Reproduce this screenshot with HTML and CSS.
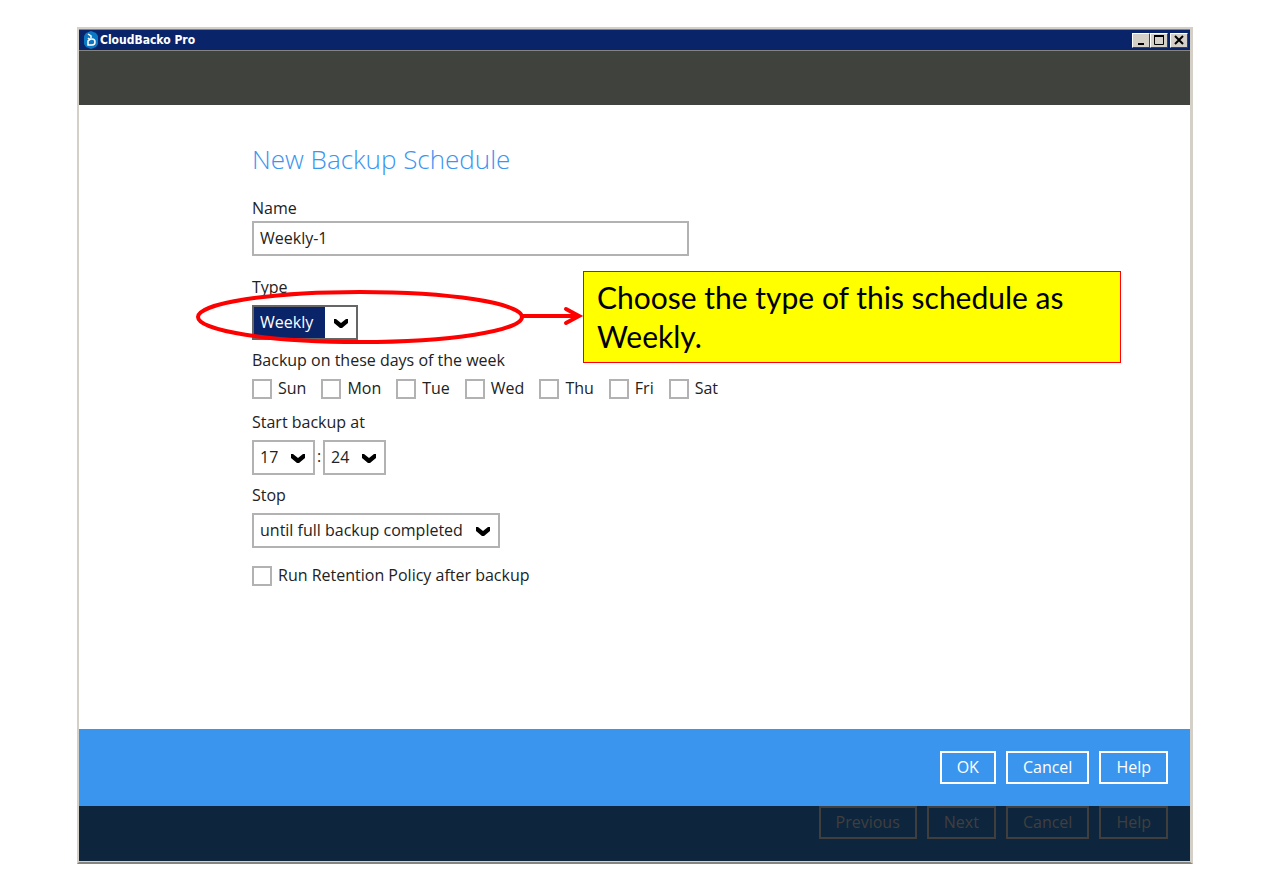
FILE: index.html
```html
<!DOCTYPE html>
<html lang="en">
<head>
    <meta charset="UTF-8">
    <meta name="viewport" content="width=device-width, initial-scale=1.0">
    <title>CloudBacko Pro</title>
    <link rel="stylesheet" href="styles.css">
</head>
<body>
    <svg width="0" height="0" class="sprite">
        <symbol id="chevron" viewBox="0 0 14 9">
            <path d="M0 0 H2 L7 4 L12 0 H14 V4 L8 9 H6 L0 4 Z"/>
        </symbol>
    </svg>

    <div class="window">
        <div class="title-bar">
            <svg class="app-icon" width="16" height="18" viewBox="0 0 16 18">
                <path d="M8 0 L13 2 L15 5 V13 L13 16 L8 18 L3 16 L1 13 V5 L3 2 Z" fill="#0a78c2"/>
                <path d="M5 3 L8 5 V7 M5 7 L6 8 H9 C13 8 13 14 9 14 H5 V10 L8 8" fill="none" stroke="#fff" stroke-width="1.5"/>
            </svg>
            <span class="title">CloudBacko Pro</span>
            <div class="window-buttons">
                <button type="button" aria-label="Minimize">
                    <svg width="14" height="10" viewBox="0 0 14 10"><path d="M4 9 H10" stroke="#000" stroke-width="2"/></svg>
                </button>
                <button type="button" aria-label="Maximize">
                    <svg width="14" height="10" viewBox="0 0 14 10"><path d="M2.5 0 V9.5 H11.5 V0" fill="none" stroke="#000"/><path d="M2 1 H12" stroke="#000" stroke-width="2"/></svg>
                </button>
                <button type="button" class="close" aria-label="Close">
                    <svg width="14" height="10" viewBox="0 0 14 10"><path d="M3 1 L11 9 M11 1 L3 9" stroke="#000" stroke-width="2"/></svg>
                </button>
            </div>
        </div>

        <div class="banner"></div>

        <form class="content">
            <h1>New Backup Schedule</h1>

            <div class="field name-field">
                <label for="name">Name</label>
                <input type="text" id="name" value="Weekly-1">
            </div>

            <div class="field type-field">
                <label for="type">Type</label>
                <span class="select type-select">
                    <select id="type">
                        <option>Weekly</option>
                    </select>
                    <svg><use href="#chevron"/></svg>
                </span>

                <div class="annotation">
                    <svg class="pointer" width="390" height="60" viewBox="0 0 390 60">
                        <ellipse cx="165" cy="30" rx="162" ry="25"/>
                        <path d="M328 29 H382"/>
                        <path d="M371 22 L384 29 L371 36" class="head"/>
                    </svg>
                    <p class="callout">Choose the type of this schedule as Weekly.</p>
                </div>
            </div>

            <fieldset class="field days-field">
                <legend>Backup on these days of the week</legend>
                <div class="days">
                    <label class="check"><input type="checkbox">Sun</label>
                    <label class="check"><input type="checkbox">Mon</label>
                    <label class="check"><input type="checkbox">Tue</label>
                    <label class="check"><input type="checkbox">Wed</label>
                    <label class="check"><input type="checkbox">Thu</label>
                    <label class="check"><input type="checkbox">Fri</label>
                    <label class="check"><input type="checkbox">Sat</label>
                </div>
            </fieldset>

            <div class="field">
                <label for="hour">Start backup at</label>
                <div class="time">
                    <span class="select time-select">
                        <select id="hour">
                            <option>17</option>
                        </select>
                        <svg><use href="#chevron"/></svg>
                    </span>
                    <span class="colon">:</span>
                    <span class="select time-select">
                        <select id="minute" aria-label="Minute">
                            <option>24</option>
                        </select>
                        <svg><use href="#chevron"/></svg>
                    </span>
                </div>
            </div>

            <div class="field">
                <label for="stop">Stop</label>
                <span class="select stop-select">
                    <select id="stop">
                        <option>until full backup completed</option>
                    </select>
                    <svg><use href="#chevron"/></svg>
                </span>
            </div>

            <label class="check retention"><input type="checkbox">Run Retention Policy after backup</label>
        </form>

        <div class="actions">
            <button type="button">OK</button>
            <button type="button">Cancel</button>
            <button type="button">Help</button>
        </div>
        <div class="actions wizard-actions">
            <button type="button" disabled>Previous</button>
            <button type="button" disabled>Next</button>
            <button type="button" disabled>Cancel</button>
            <button type="button" disabled>Help</button>
        </div>
    </div>
</body>
</html>
```
FILE: styles.css
```css
:root {
    --frame: #d4d0c8;
    --frame-dark: #86847f;
    --title-bg: #0a246a;
    --banner-bg: #40423e;
    --accent: #3a95ef;
    --dimmed-bg: #0d263d;
    --dimmed-line: #413f3e;
    --field-border: #b2b2b2;
    --text: #222;
}

* {
    box-sizing: border-box;
}

body {
    margin: 0;
    padding: 27px 75px 24px 77px;
    min-height: 100vh;
    display: flex;
    background-color: #fff;
    color: var(--text);
    font-family: "Open Sans", sans-serif;
    font-size: 16px;
    line-height: 24px;
}

.sprite {
    position: absolute;
}

.window {
    flex: 1;
    display: flex;
    flex-direction: column;
    border: 2px solid var(--frame);
    border-right-width: 3px;
    border-bottom-color: var(--frame-dark);
}

.title-bar {
    display: flex;
    align-items: center;
    height: 22px;
    padding: 0 2px 0 4px;
    background-color: var(--title-bg);
    border-top: 1px solid var(--frame-dark);
    border-bottom: 1px solid var(--frame-dark);
}

.title {
    flex: 1;
    padding-left: 1px;
    color: #fff;
    font-family: "DejaVu Sans Condensed", "DejaVu Sans", sans-serif;
    font-size: 12px;
    font-weight: bold;
}

.window-buttons {
    display: flex;
}

.window-buttons button {
    width: 18px;
    height: 15px;
    padding: 0;
    display: flex;
    align-items: center;
    justify-content: center;
    background-color: var(--frame);
    border: 1px solid;
    border-color: #fff #404040 #404040 #fff;
}

.window-buttons .close {
    margin-left: 2px;
}

.banner {
    height: 54px;
    background-color: var(--banner-bg);
}

.content {
    flex: 1;
    padding: 34px 20px 40px 173px;
}

h1 {
    margin: 0 0 17px;
    color: var(--accent);
    font-size: 26px;
    font-weight: 300;
    line-height: 40px;
}

.field {
    display: flex;
    flex-direction: column;
    align-items: flex-start;
    gap: 6px;
    margin: 0 0 8px;
    padding: 0;
    border: none;
}

.name-field {
    gap: 1px;
    margin-bottom: 19px;
}

.type-field {
    position: relative;
}

.days-field {
    display: block;
    margin-bottom: 10px;
}

legend {
    padding: 0;
    margin-bottom: 4px;
}

input[type="text"],
select {
    appearance: none;
    width: 100%;
    height: 35px;
    margin: 0;
    padding: 0 6px 2px;
    background-color: #fff;
    border: 2px solid var(--field-border);
    border-radius: 0;
    color: var(--text);
    font: inherit;
}

input[type="text"] {
    max-width: 437px;
}

.select {
    position: relative;
    display: block;
}

.select svg {
    position: absolute;
    top: 14px;
    right: 10px;
    width: 14px;
    height: 9px;
    pointer-events: none;
}

.type-select {
    width: 106px;
}

.type-select select {
    background: linear-gradient(to left, #fff 31px, var(--title-bg) 31px);
    border-color: #666;
    color: #fff;
}

.time-select {
    width: 63px;
}

.stop-select {
    width: 248px;
}

.time {
    display: flex;
}

.colon {
    width: 8px;
    line-height: 32px;
    text-align: center;
}

.days {
    display: flex;
    flex-wrap: wrap;
    gap: 15px;
}

.check {
    display: flex;
    align-items: center;
    gap: 6px;
}

.check input {
    appearance: none;
    width: 20px;
    height: 20px;
    margin: 2px 0 0;
    background-color: #fff;
    border: 2px solid var(--field-border);
}

.check input:checked {
    background-color: var(--accent);
}

.retention {
    margin-top: 15px;
}

/* Tutorial callout drawn over the form */
.annotation {
    position: absolute;
    top: -4px;
    left: -57px;
    width: 926px;
    display: flex;
    pointer-events: none;
}

.pointer {
    flex: none;
    margin-top: 16px;
    fill: none;
    stroke: #f00;
    stroke-width: 4;
}

.pointer .head {
    stroke-linecap: round;
}

.callout {
    flex: 1;
    margin: 0 0 0 -2px;
    padding: 6px 13px;
    background-color: #ff0;
    border: 1px solid #f00;
    color: #000;
    font-family: Lato, sans-serif;
    font-size: 30px;
    line-height: 39px;
}

.actions {
    display: flex;
    justify-content: flex-end;
    gap: 10px;
    padding: 22px 22px 22px 20px;
    background-color: var(--accent);
}

.actions button {
    height: 33px;
    padding: 0 15px 2px;
    background: none;
    border: 2px solid #fff;
    color: #fff;
    font: inherit;
}

.wizard-actions {
    padding-top: 0;
    background-color: var(--dimmed-bg);
    border-bottom: 1px solid var(--frame);
}

.wizard-actions button {
    border-color: var(--dimmed-line);
    color: var(--dimmed-line);
}
```
